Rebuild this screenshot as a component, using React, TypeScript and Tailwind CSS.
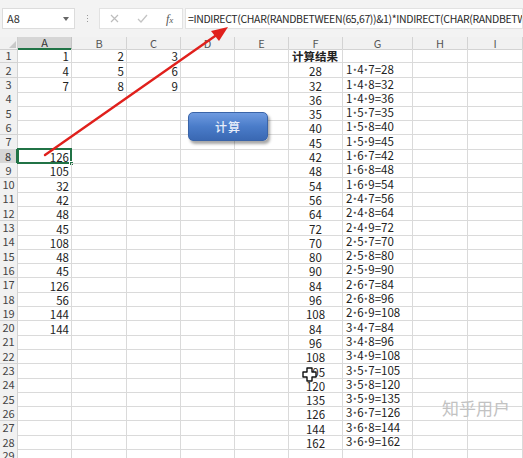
import React from "react";

const COLS = ["A", "B", "C", "D", "E", "F", "G", "H", "I"];
const ROW_COUNT = 29;

type Cell = { v: string; align?: "left" | "right" | "center"; bold?: boolean };

const products: [string, string][] = [
  ["28", "1*4*7=28"],
  ["32", "1*4*8=32"],
  ["36", "1*4*9=36"],
  ["35", "1*5*7=35"],
  ["40", "1*5*8=40"],
  ["45", "1*5*9=45"],
  ["42", "1*6*7=42"],
  ["48", "1*6*8=48"],
  ["54", "1*6*9=54"],
  ["56", "2*4*7=56"],
  ["64", "2*4*8=64"],
  ["72", "2*4*9=72"],
  ["70", "2*5*7=70"],
  ["80", "2*5*8=80"],
  ["90", "2*5*9=90"],
  ["84", "2*6*7=84"],
  ["96", "2*6*8=96"],
  ["108", "2*6*9=108"],
  ["84", "3*4*7=84"],
  ["96", "3*4*8=96"],
  ["108", "3*4*9=108"],
  ["105", "3*5*7=105"],
  ["120", "3*5*8=120"],
  ["135", "3*5*9=135"],
  ["126", "3*6*7=126"],
  ["144", "3*6*8=144"],
  ["162", "3*6*9=162"],
];

const colA: Record<number, string> = {
  1: "1", 2: "4", 3: "7",
  8: "126", 9: "105", 10: "32", 11: "42", 12: "48", 13: "45", 14: "108",
  15: "48", 16: "45", 17: "126", 18: "56", 19: "144", 20: "144",
};

function cellAt(row: number, col: string): Cell | null {
  if (col === "A" && colA[row]) return { v: colA[row], align: "right" };
  if (col === "B" && row <= 3) return { v: ["2", "5", "8"][row - 1], align: "right" };
  if (col === "C" && row <= 3) return { v: ["3", "6", "9"][row - 1], align: "right" };
  if (col === "F" && row === 1) return { v: "计算结果", align: "left", bold: true };
  if (row >= 2 && row - 2 < products.length) {
    const [f, g] = products[row - 2];
    if (col === "F") return { v: f, align: "center" };
    if (col === "G") return { v: g, align: "left" };
  }
  return null;
}

// Formula text: the multiplication sign is drawn small and centred, as the sheet font does
function CellText({ v }: { v: string }) {
  if (!v.includes("*")) return <>{v}</>;
  const parts = v.split("*");
  return (
    <>
      {parts.map((p, i) => (
        <React.Fragment key={i}>
          {p}
          {i < parts.length - 1 && (
            <span className="inline-block text-[8px] relative top-[1px] mx-[0.5px]">*</span>
          )}
        </React.Fragment>
      ))}
    </>
  );
}

const gridCols =
  "grid grid-cols-[18px_54px_55px_54px_54px_54px_54px_70px_55px_55px]";

function Toolbar() {
  return (
    <div className="h-[37px] bg-[#f3f3f3] flex items-start pt-[8px]">
      <div className="ml-[2px] w-[73px] h-[21px] bg-white border border-[#dcdcdc] flex items-center justify-between pl-[4px] pr-[5px]">
        <span className="text-[11px] text-[#333]">A8</span>
        <svg width="6" height="4" viewBox="0 0 6 4">
          <path d="M0 0h6L3 4z" fill="#666" />
        </svg>
      </div>
      <div className="w-[24px] h-[21px] flex flex-col items-center justify-center gap-[2px]">
        <div className="w-[1px] h-[1px] bg-[#9a9a9a]" />
        <div className="w-[1px] h-[1px] bg-[#9a9a9a]" />
        <div className="w-[1px] h-[1px] bg-[#9a9a9a]" />
      </div>
      <div className="w-[84px] h-[21px] bg-white border border-[#e2e2e2] flex items-center">
        <svg className="ml-[10px]" width="9" height="9" viewBox="0 0 9 9">
          <path d="M1 1l7 7M8 1L1 8" stroke="#bdbdbd" strokeWidth="1.2" />
        </svg>
        <svg className="ml-[18px]" width="11" height="9" viewBox="0 0 11 9">
          <path d="M1 5l3 3 6-7" stroke="#c4c4c4" strokeWidth="1.3" fill="none" />
        </svg>
        <span className="ml-[18px] text-[12px] italic text-[#555] font-['Liberation_Serif',serif] leading-none">
          f<span className="text-[9px]">x</span>
        </span>
      </div>
      <div className="ml-[2px] flex-1 h-[21px] bg-white border border-[#e2e2e2] overflow-hidden whitespace-nowrap pl-[2px] flex items-center">
        <span className="text-[10.5px] text-[#2a2a2a] tracking-[-0.35px]">
          =INDIRECT(CHAR(RANDBETWEEN(65,67))&amp;1)*INDIRECT(CHAR(RANDBETWEEN(65,67))&amp;2)
        </span>
      </div>
    </div>
  );
}

function HeaderRow() {
  return (
    <div className={`${gridCols} h-[12px]`}>
      <div className="bg-[#f1f1f1] border-r border-b border-[#cfcfcf] relative">
        <svg className="absolute right-[1px] bottom-[1px]" width="7" height="7" viewBox="0 0 7 7">
          <path d="M7 0v7H0z" fill="#c9c9c9" />
        </svg>
      </div>
      {COLS.map((c) => (
        <div
          key={c}
          className={
            c === "A"
              ? "bg-[#d6d6d6] border-r border-[#c4c4c4] border-b-2 border-b-[#217346] flex items-center justify-center text-[11px] leading-none text-[#333]"
              : "bg-[#f1f1f1] border-r border-b border-[#d3d3d3] flex items-center justify-center text-[11px] leading-none text-[#555]"
          }
        >
          {c}
        </div>
      ))}
    </div>
  );
}

function Row({ r }: { r: number }) {
  const isSel = r === 8;
  return (
    <div className={`${gridCols} h-[14.3px]`}>
      <div
        className={
          isSel
            ? "bg-[#d6d6d6] border-r-2 border-r-[#217346] border-b border-[#cfcfcf] flex items-center justify-center text-[11px] leading-none text-[#333]"
            : "bg-[#f1f1f1] border-r border-b border-[#d3d3d3] flex items-center justify-center text-[11px] leading-none text-[#444]"
        }
      >
        {r}
      </div>
      {COLS.map((c) => {
        const cell = cellAt(r, c);
        const justify =
          cell?.align === "right"
            ? "justify-end pr-[2px]"
            : cell?.align === "center"
            ? "justify-center"
            : "justify-start pl-[3px]";
        return (
          <div
            key={c}
            className={`relative border-r border-b border-[#dadada] flex items-end ${justify} overflow-visible whitespace-nowrap`}
          >
            {cell && (
              <span
                className={`text-[11.5px] leading-[12px] text-[#222] ${cell.bold ? "font-bold" : ""}`}
              >
                <CellText v={cell.v} />
              </span>
            )}
            {isSel && c === "A" && (
              <div className="absolute left-[-1px] top-[-1px] right-[-1px] bottom-[-1px] border-2 border-[#217346]">
                <div className="absolute right-[-4px] bottom-[-4px] w-[5px] h-[5px] bg-[#217346] border border-white" />
              </div>
            )}
          </div>
        );
      })}
    </div>
  );
}

export default function App() {
  const rows = Array.from({ length: ROW_COUNT }, (_, i) => i + 1);
  return (
    <div className="relative w-[523px] h-[458px] overflow-hidden bg-white font-['Noto_Sans_CJK_SC','Noto_Sans',sans-serif]">
      <Toolbar />
      <HeaderRow />
      <div>
        {rows.map((r) => (
          <Row key={r} r={r} />
        ))}
      </div>

      {/* macro button */}
      <div className="absolute left-[188px] top-[112px] w-[80px] h-[29px] rounded-[5px] bg-gradient-to-b from-[#6f9be0] via-[#4a7cc9] to-[#3a68b3] border border-[#3a64a8] shadow-[2px_3px_3px_rgba(0,0,0,0.35)] flex items-center justify-center">
        <span className="text-[12px] text-[#e8eefa] font-medium tracking-[1px]">计算</span>
      </div>

      {/* red annotation arrow */}
      <svg className="absolute left-0 top-0 pointer-events-none" width="523" height="458">
        <line x1="45" y1="155" x2="218" y2="34" stroke="#e0201c" strokeWidth="2.4" strokeLinecap="round" />
        <path d="M228 27 L211 31 L219 41 Z" fill="#e0201c" />
      </svg>

      {/* move cursor */}
      <svg className="absolute left-[302px] top-[367px]" width="15" height="15" viewBox="0 0 15 15">
        <path
          d="M5 1h5v4h4v5h-4v4H5v-4H1V5h4z"
          fill="#fff"
          stroke="#111"
          strokeWidth="1.4"
          strokeLinejoin="round"
        />
      </svg>

      {/* watermark */}
      <div className="absolute left-[442px] top-[395px] text-[17px] text-[#c2c2c2] tracking-[0px]">
        知乎用户
      </div>
    </div>
  );
}
